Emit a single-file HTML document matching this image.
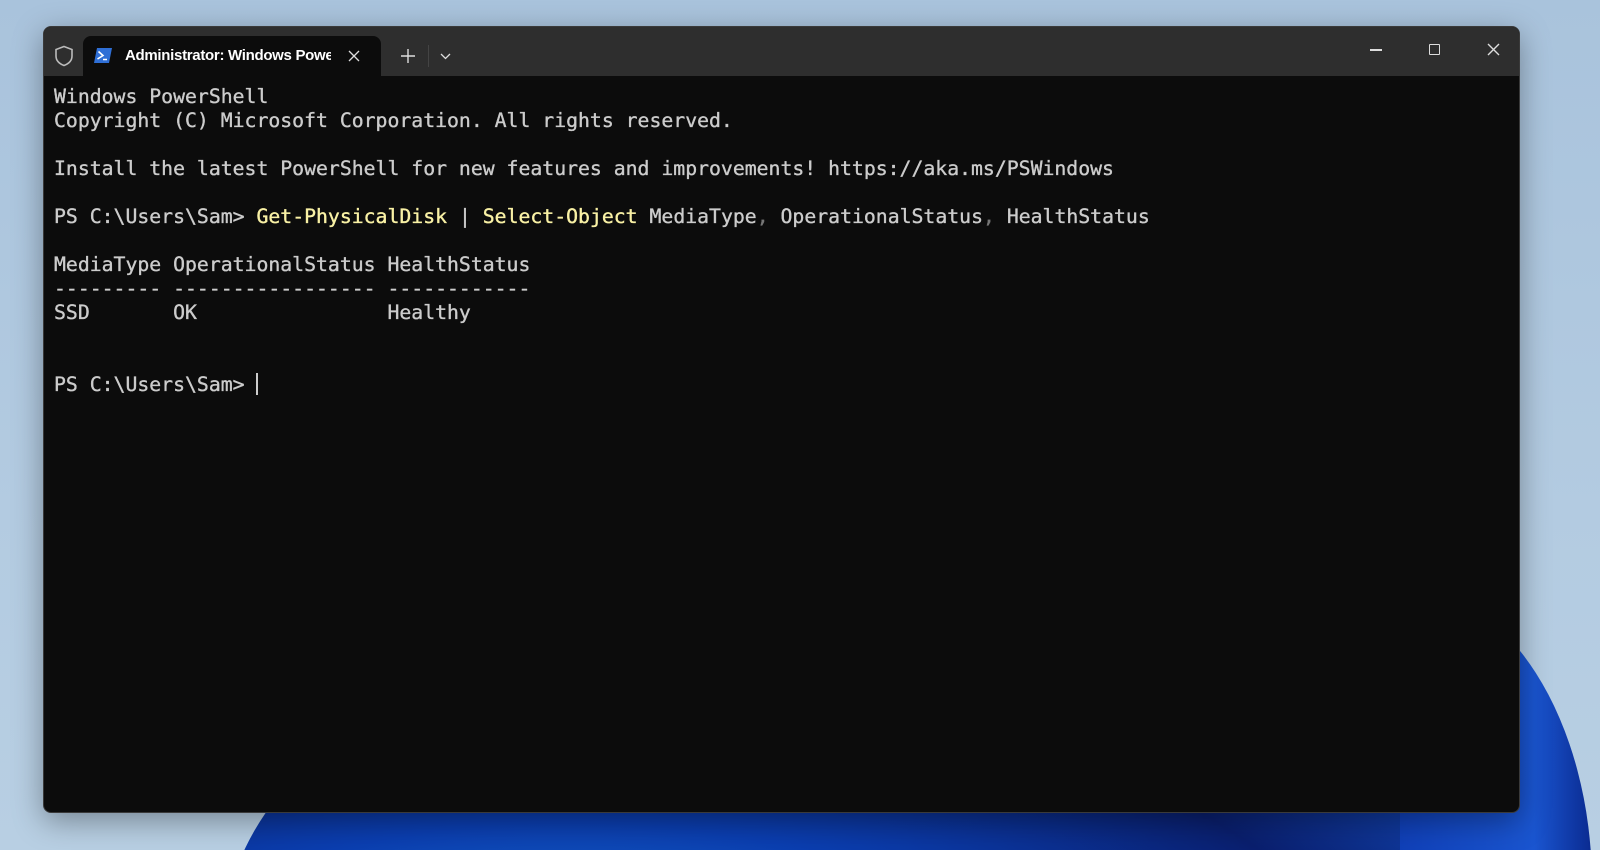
<!DOCTYPE html>
<html><head><meta charset="utf-8"><style>
html,body{margin:0;padding:0;width:1600px;height:850px;overflow:hidden;}
body{background:linear-gradient(180deg,#a9c3dc 0%,#b3cbe1 60%,#b8cfe3 100%);}
.wrap{position:absolute;left:0;top:0;width:1600px;height:850px;overflow:hidden;font-family:"Liberation Sans",sans-serif;}
.bloom{position:absolute;left:225px;top:575px;width:1370px;height:600px;border-radius:50% 50% 0 0/60% 60% 0 0;
background:radial-gradient(ellipse at 25% 95%,#3fb8e8 0%,#1f7fd8 18%,#0b3eb0 40%,#0a1f6e 60%,#1553cc 80%,#0b35a8 100%);}
.bloom2{position:absolute;left:1400px;top:585px;width:192px;height:300px;border-radius:0 100% 0 0/0 100% 0 0;background:linear-gradient(90deg,#1040b8,#1a55d0 70%,#0a2a90);}
.win{position:absolute;left:43px;top:26px;width:1477px;height:787px;border-radius:8px;background:#0c0c0c;overflow:hidden;box-shadow:0 8px 30px rgba(0,0,0,.35);border:1px solid #3a3a3a;box-sizing:border-box;}
.tb{position:absolute;left:0;top:0;right:0;height:49px;background:#2e2e2e;}
.tab{position:absolute;left:39px;top:9px;width:298px;height:40px;background:#0c0c0c;border-radius:8px 8px 0 0;}
.tab .t{position:absolute;left:42px;top:11px;color:#fff;font-size:15px;font-weight:bold;white-space:nowrap;width:206px;overflow:hidden;letter-spacing:-0.3px;}
.term{position:absolute;left:10px;top:58px;font-family:"DejaVu Sans Mono",monospace;font-size:19.8px;line-height:24px;color:#cccccc;white-space:pre;-webkit-text-stroke:0.35px currentColor;}
.y{color:#f9f1a5}.g{color:#767676}
</style></head><body><div class="wrap">
<div class="bloom"></div><div class="bloom2"></div>
<div class="win">
<div class="tb">
<svg style="position:absolute;left:10px;top:18px" width="20" height="22" viewBox="0 0 20 22"><path d="M10 1.5 L18 4.5 V11 C18 16 14 19 10 20.5 C6 19 2 16 2 11 V4.5 Z" fill="none" stroke="#bbb" stroke-width="1.6"/></svg>
<div class="tab">
<svg style="position:absolute;left:11px;top:12px" width="18" height="15" viewBox="0 0 18 15"><path d="M3 0 H18 L15 15 H0 Z" fill="#2f6fd6"/><path d="M4.5 3.5 L9 7.5 L3.5 11" fill="none" stroke="#fff" stroke-width="1.6"/><path d="M9 11.5 H13" stroke="#fff" stroke-width="1.5"/></svg>
<div class="t">Administrator: Windows PowerShell</div>
<svg style="position:absolute;left:265px;top:14px" width="12" height="12" viewBox="0 0 12 12"><path d="M1 1 L11 11 M11 1 L1 11" stroke="#ddd" stroke-width="1.3"/></svg>
</div>
<svg style="position:absolute;left:357px;top:22px" width="14" height="14" viewBox="0 0 14 14"><path d="M7 0 V14 M0 7 H14" stroke="#ddd" stroke-width="1.4"/></svg>
<div style="position:absolute;left:384px;top:18px;width:1px;height:22px;background:#444"></div>
<svg style="position:absolute;left:396px;top:26px" width="11" height="7" viewBox="0 0 11 7"><path d="M1 1 L5.5 5.5 L10 1" fill="none" stroke="#ddd" stroke-width="1.3"/></svg>
<div style="position:absolute;left:1326px;top:22px;width:12px;height:1.5px;background:#ddd"></div>
<div style="position:absolute;left:1385px;top:17px;width:9px;height:9px;border:1.5px solid #ddd;border-radius:1px"></div>
<svg style="position:absolute;left:1443px;top:16px" width="13" height="13" viewBox="0 0 13 13"><path d="M1 1 L12 12 M12 1 L1 12" stroke="#ddd" stroke-width="1.4"/></svg>
</div>
<div class="term">Windows PowerShell
Copyright (C) Microsoft Corporation. All rights reserved.

Install the latest PowerShell for new features and improvements! https://aka.ms/PSWindows

PS C:\Users\Sam&gt; <span class="y">Get-PhysicalDisk</span> | <span class="y">Select-Object</span> MediaType<span class="g">,</span> OperationalStatus<span class="g">,</span> HealthStatus

MediaType OperationalStatus HealthStatus
--------- ----------------- ------------
SSD       OK                Healthy


PS C:\Users\Sam&gt; <span style="display:inline-block;width:2px;height:22px;background:#ccc;vertical-align:-4px;-webkit-text-stroke:0"></span></div>
</div>
</div></body></html>
